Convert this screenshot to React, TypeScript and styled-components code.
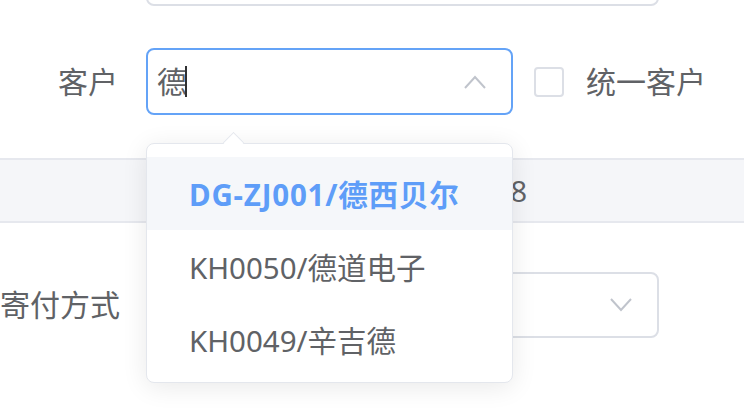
import React from "react";
import styled, { createGlobalStyle } from "styled-components";

const Global = createGlobalStyle`
  html, body { margin: 0; padding: 0; background: #ffffff; }
  body { font-family: "Noto Sans", "Noto Sans CJK SC", sans-serif; overflow: hidden; }
  * { box-sizing: border-box; }
`;

const Page = styled.div`
  position: relative;
  width: 744px;
  height: 410px;
  overflow: hidden;
  background: #fff;
`;

const Form = styled.div`
  display: flex;
  flex-direction: column;
  margin-top: -60px;
`;

const Row = styled.div<{ $gap: number }>`
  display: flex;
  align-items: center;
  margin-top: ${(p) => p.$gap}px;
`;

const Label = styled.div`
  width: 146px;
  flex: none;
  padding-right: 28px;
  text-align: right;
  font-size: 30px;
  line-height: 40px;
  color: #606266;
  white-space: nowrap;
`;

const Field = styled.div<{ $w: number; $h: number; $focus?: boolean }>`
  position: relative;
  flex: none;
  width: ${(p) => p.$w}px;
  height: ${(p) => p.$h}px;
  border: 2px solid ${(p) => (p.$focus ? "#64a3f7" : "#dcdfe6")};
  border-radius: 8px;
  background: #fff;
  display: flex;
  align-items: center;
  padding: 0 24px 0 9px;
`;

const InputText = styled.span`
  font-size: 30px;
  line-height: 40px;
  color: #606266;
  display: flex;
  align-items: center;
`;

const Caret = styled.span`
  display: inline-block;
  width: 2px;
  height: 31px;
  background: #303133;
  margin-left: -2px;
`;

const Chevron = styled.svg`
  margin-left: auto;
  width: 24px;
  height: 16px;
  flex: none;
`;

const CheckLabel = styled.label`
  display: flex;
  align-items: center;
  margin-left: 21px;
  gap: 22px;
  font-size: 30px;
  line-height: 40px;
  color: #606266;
`;

const CheckBox = styled.span`
  width: 30px;
  height: 30px;
  border: 2px solid #dcdfe6;
  border-radius: 4px;
  background: #fff;
`;

const Band = styled.div`
  margin-top: 43px;
  height: 65px;
  background: #f5f6f9;
  border-top: 2px solid #e6e8ee;
  border-bottom: 2px solid #e6e8ee;
  display: flex;
  align-items: center;
`;

const BandValue = styled.div`
  width: 527px;
  text-align: right;
  font-size: 29px;
  line-height: 40px;
  color: #606266;
`;

const Popper = styled.div`
  position: absolute;
  left: -2px;
  top: calc(100% + 30px);
  width: 367px;
  height: 240px;
  background: #fff;
  border: 1.5px solid #e4e7ed;
  border-radius: 8px;
  box-shadow: 0 4px 26px rgba(0, 0, 0, 0.09);
  padding: 13px 0 6px;
  z-index: 5;
`;

const Arrow = styled.span`
  position: absolute;
  top: -9px;
  left: 79px;
  width: 15px;
  height: 15px;
  background: #fff;
  border-top: 1.5px solid #e4e7ed;
  border-left: 1.5px solid #e4e7ed;
  transform: rotate(45deg);
`;

const List = styled.ul`
  list-style: none;
  margin: 0;
  padding: 0;
`;

const Item = styled.li<{ $active?: boolean }>`
  height: 73px;
  display: flex;
  align-items: center;
  padding-left: 42px;
  font-size: 29.5px;
  color: ${(p) => (p.$active ? "#5e9df8" : "#606266")};
  font-weight: ${(p) => (p.$active ? 700 : 400)};
  letter-spacing: ${(p) => (p.$active ? "0.8px" : "0")};
  background: ${(p) => (p.$active ? "#f5f7fa" : "transparent")};
  white-space: nowrap;
`;

const ChevronUp = () => (
  <Chevron viewBox="0 0 24 16">
    <polyline points="2,14 12,3 22,14" fill="none" stroke="#c0c4cc" strokeWidth="2" />
  </Chevron>
);

const ChevronDown = () => (
  <Chevron viewBox="0 0 24 16">
    <polyline points="2,2 12,13 22,2" fill="none" stroke="#c0c4cc" strokeWidth="2" />
  </Chevron>
);

const options = [
  { label: "DG-ZJ001/德西贝尔", active: true },
  { label: "KH0050/德道电子" },
  { label: "KH0049/辛吉德" },
];

export default function App() {
  return (
    <Page>
      <Global />
      <Form>
        <Row $gap={0}>
          <Label />
          <Field $w={513} $h={66} />
        </Row>
        <Row $gap={42}>
          <Label>客户</Label>
          <Field $w={367} $h={67} $focus>
            <InputText>
              德<Caret />
            </InputText>
            <ChevronUp />
            <Popper>
              <Arrow />
              <List>
                {options.map((o) => (
                  <Item key={o.label} $active={o.active}>
                    {o.label}
                  </Item>
                ))}
              </List>
            </Popper>
          </Field>
          <CheckLabel>
            <CheckBox />
            统一客户
          </CheckLabel>
        </Row>
        <Band>
          <BandValue>8</BandValue>
        </Band>
        <Row $gap={49}>
          <Label>寄付方式</Label>
          <Field $w={513} $h={66}>
            <ChevronDown />
          </Field>
        </Row>
      </Form>
    </Page>
  );
}
